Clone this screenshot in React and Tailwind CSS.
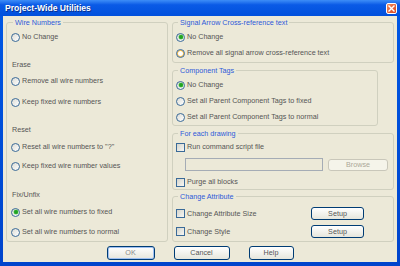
import React from "react";

function Radio({ checked = false, hover = false }) {
  return (
    <span
      className={
        hover
          ? "flex items-center justify-center shrink-0 w-[9px] h-[9px] rounded-full border border-[#3a6a98] bg-white shadow-[inset_0_0_0_1px_#f5b73b]"
          : "flex items-center justify-center shrink-0 w-[9px] h-[9px] rounded-full border border-[#3a6a98] bg-gradient-to-br from-[#dcdcd5] to-white"
      }
    >
      {checked && <span className="w-[4px] h-[4px] rounded-full bg-[#22a322] shadow-[0_0_0_0.5px_#6fd06f]" />}
    </span>
  );
}

function Check() {
  return (
    <span className="shrink-0 w-[9px] h-[9px] border border-[#3a6a98] bg-gradient-to-br from-[#d4d4cc] to-[#f7f7f4]" />
  );
}

function RadioRow({ label, checked, hover, mt }) {
  return (
    <div className={`flex items-center h-[10px] gap-[2px] ${mt}`}>
      <Radio checked={checked} hover={hover} />
      <span className="whitespace-nowrap">{label}</span>
    </div>
  );
}

function CheckRow({ label, mt }) {
  return (
    <div className={`flex items-center h-[10px] gap-[2px] ${mt}`}>
      <Check />
      <span className="whitespace-nowrap">{label}</span>
    </div>
  );
}

function Legend({ children }) {
  return (
    <div className="-mt-[5px] ml-[2px] px-[2px] w-fit h-[9px] leading-[9px] bg-[#ece9d8] text-[#2d5ad8] whitespace-nowrap">
      {children}
    </div>
  );
}

function Btn({ children, w, disabled = false, def = false }) {
  let cls = "flex items-center justify-center h-full rounded-[3px] border ";
  if (disabled) cls += "border-[#c9c7ba] bg-[#f5f4ea] text-[#aca899] ";
  else if (def)
    cls +=
      "border-[#003c74] bg-gradient-to-b from-white to-[#e6e6dc] text-[#8a8a8a] shadow-[inset_0_0_0_1px_#9fc0f2] ";
  else cls += "border-[#003c74] bg-gradient-to-b from-white to-[#e6e6dc] text-[#555] ";
  return <div className={cls + w}>{children}</div>;
}

export default function App() {
  return (
    <div className="w-[400px] h-[266px] flex flex-col bg-gradient-to-b from-[#0058e6] to-[#0044cc] font-['Liberation_Sans',Arial,sans-serif] text-[7.2px] leading-[10px] text-[#555] overflow-hidden">
      {/* Title bar */}
      <div className="h-[16px] shrink-0 flex items-center pl-[5px] pr-[3px] bg-gradient-to-b from-[#3d8df7] via-[#0a5ae6] via-30% to-[#0150dc]">
        <span className="text-white font-bold text-[8.6px] leading-[12px] [text-shadow:1px_1px_0_#0b2f8a]">
          Project-Wide Utilities
        </span>
        <div className="ml-auto w-[11px] h-[11px] rounded-[2px] border border-white bg-gradient-to-br from-[#f08a5d] to-[#d8401a] flex items-center justify-center">
          <svg width="7" height="7" viewBox="0 0 7 7">
            <path d="M1 1 L6 6 M6 1 L1 6" stroke="white" strokeWidth="1.4" strokeLinecap="square" />
          </svg>
        </div>
      </div>

      {/* Body */}
      <div className="flex-1 mx-[3px] mb-[4px] bg-[#ece9d8] flex flex-col">
        <div className="flex pt-[6px] pl-[3px]">
          {/* Left group */}
          <div className="w-[162px] h-[220px] border border-[#d0d0bf] rounded-[3px] pl-[4px]">
            <Legend>Wire Numbers</Legend>
            <RadioRow label="No Change" mt="mt-[5px]" />
            <div className="mt-[18px] h-[10px] pl-[1px]">Erase</div>
            <RadioRow label="Remove all wire numbers" mt="mt-[6px]" />
            <RadioRow label="Keep fixed wire numbers" mt="mt-[11px]" />
            <div className="mt-[18px] h-[10px] pl-[1px]">Reset</div>
            <RadioRow label={'Reset all wire numbers to "?"'} mt="mt-[7px]" />
            <RadioRow label="Keep fixed wire number values" mt="mt-[9px]" />
            <div className="mt-[19px] h-[10px] pl-[1px]">Fix/Unfix</div>
            <RadioRow label="Set all wire numbers to fixed" checked mt="mt-[7px]" />
            <RadioRow label="Set all wire numbers to normal" mt="mt-[10px]" />
          </div>

          {/* Right column */}
          <div className="ml-[4px] w-[222px] flex flex-col">
            <div className="h-[41px] border border-[#d0d0bf] rounded-[3px] pl-[3px]">
              <Legend>Signal Arrow Cross-reference text</Legend>
              <RadioRow label="No Change" checked mt="mt-[5px]" />
              <RadioRow label="Remove all signal arrow cross-reference text" hover mt="mt-[6px]" />
            </div>

            <div className="mt-[7px] w-[206px] h-[56px] border border-[#d0d0bf] rounded-[3px] pl-[3px]">
              <Legend>Component Tags</Legend>
              <RadioRow label="No Change" checked mt="mt-[5px]" />
              <RadioRow label="Set all Parent Component Tags to fixed" mt="mt-[6px]" />
              <RadioRow label="Set all Parent Component Tags to normal" mt="mt-[6px]" />
            </div>

            <div className="mt-[7px] h-[57px] border border-[#d0d0bf] rounded-[3px] pl-[3px]">
              <Legend>For each drawing</Legend>
              <CheckRow label="Run command script file" mt="mt-[4px]" />
              <div className="flex items-center h-[13px] mt-[6px] ml-[9px]">
                <div className="w-[138px] h-[13px] border border-[#a5acb5] bg-[#ece9d8]" />
                <div className="ml-[5px] h-[12px]">
                  <Btn w="w-[60px]" disabled>
                    Browse
                  </Btn>
                </div>
              </div>
              <CheckRow label="Purge all blocks" mt="mt-[6px]" />
            </div>

            <div className="mt-[6px] h-[46px] border border-[#d0d0bf] rounded-[3px] pl-[3px]">
              <Legend>Change Attribute</Legend>
              <div className="flex items-center h-[13px] mt-[6px]">
                <div className="flex-1 flex items-center gap-[2px]">
                  <Check />
                  <span>Change Attribute Size</span>
                </div>
                <div className="h-[13px] mr-[29px]">
                  <Btn w="w-[53px]">Setup</Btn>
                </div>
              </div>
              <div className="flex items-center h-[13px] mt-[5px]">
                <div className="flex-1 flex items-center gap-[2px]">
                  <Check />
                  <span>Change Style</span>
                </div>
                <div className="h-[13px] mr-[29px]">
                  <Btn w="w-[53px]">Setup</Btn>
                </div>
              </div>
            </div>
          </div>
        </div>

        {/* Buttons */}
        <div className="mt-[4px] h-[14px] flex justify-center gap-[19px]">
          <Btn w="w-[48px]" def>
            OK
          </Btn>
          <Btn w="w-[56px]">Cancel</Btn>
          <Btn w="w-[45px]">Help</Btn>
        </div>
      </div>
    </div>
  );
}
